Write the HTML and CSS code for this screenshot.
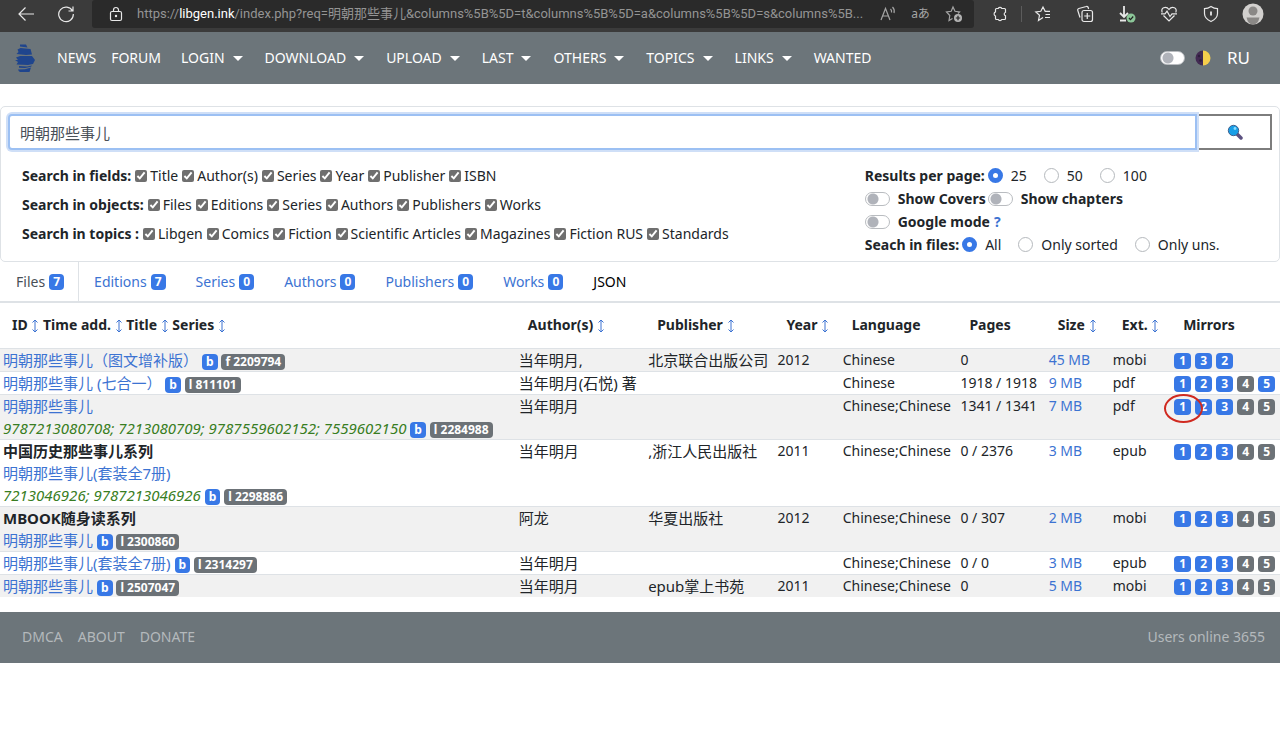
FILE: index.html
```html
<!DOCTYPE html>
<html lang="en">
<head>
  <meta charset="UTF-8">
  <meta name="viewport" content="width=device-width, initial-scale=1.0">
  <title>Library Genesis</title>
  <link rel="stylesheet" href="styles.css">
</head>
<body>

  <svg width="0" height="0" class="defs">
    <symbol id="sort" viewBox="0 0 7 14"><path d="M3.500 1v12M1 3.500L3.500 1 6 3.500M1 10.500L3.500 13 6 10.500"/></symbol>
  </svg>

  <div class="browser-bar">
    <button class="bar-btn nav-btn" aria-label="Back"><svg width="18" height="18" viewBox="0 0 18 18"><path d="M17 9H2M8.500 2.500L2 9l6.500 6.500"/></svg></button>
    <button class="bar-btn nav-btn" aria-label="Refresh"><svg width="18" height="18" viewBox="0 0 18 18"><path d="M15.500 6A7.300 7.300 0 1 0 16.300 9M16 1.500V6h-4.500"/></svg></button>
    <div class="address">
      <svg class="lock" width="16" height="16" viewBox="0 0 16 16"><rect x="2.500" y="5.500" width="11" height="9" rx="1.500"/><path d="M5.500 5.500V4a2.500 2.500 0 0 1 5 0v1.500"/><circle cx="8" cy="10" r=".6"/></svg>
      <span class="url">https://<span class="host">libgen.ink</span>/index.php?req=明朝那些事儿&amp;columns%5B%5D=t&amp;columns%5B%5D=a&amp;columns%5B%5D=s&amp;columns%5B...</span>
      <button class="bar-btn url-btn" aria-label="Read aloud"><svg width="18" height="18" viewBox="0 0 18 18"><path d="M2 15L6.500 3.500 11 15M3.500 11h6M11.500 4q1.500 1.500 1 3.500M13.500 2q2.500 2.500 1.500 6"/></svg></button>
      <button class="bar-btn url-btn" aria-label="Translate">aあ</button>
      <button class="bar-btn url-btn" aria-label="Add to favorites"><svg width="18" height="18" viewBox="0 0 18 18"><path d="M7.500 13.500L4 15.500l.8-5L1.500 7l4.700-.7L8 2l2 4.300 4.500.7-1.500 1.500"/><circle cx="13" cy="13" r="4" class="fill"/><path class="dark" d="M13 10.800v4.400M10.800 13h4.400"/></svg></button>
    </div>
    <button class="bar-btn" aria-label="Extensions"><svg width="18" height="18" viewBox="0 0 18 18"><path d="M5.500 3.500h1.700a2 2 0 0 1 3.600 0h2.700q1 0 1 1v2.700a1.900 1.900 0 0 0 0 3.600v2.700q0 1-1 1h-2.700a2 2 0 0 1-3.600 0H5.500q-1 0-1-1v-2.500a2.200 2.200 0 0 1 0-4.100V4.500q0-1 1-1z"/></svg></button>
    <span class="bar-sep"></span>
    <button class="bar-btn" aria-label="Favorites"><svg width="18" height="18" viewBox="0 0 18 18"><path d="M9 12.500l-4.500 3 1-5.200L1.800 7l5-.7L9 2l2.200 4.300H16M11.500 9.500H16M11 12.500h5"/></svg></button>
    <button class="bar-btn" aria-label="Collections"><svg width="18" height="18" viewBox="0 0 18 18"><path d="M4 12.500L1.800 5.500a1.500 1.500 0 0 1 1-2l7.500-2a1.500 1.500 0 0 1 1.900 1l.4 1.500"/><rect x="6" y="5.500" width="10.500" height="11" rx="2"/><path d="M11.250 8v6M8.250 11h6"/></svg></button>
    <button class="bar-btn" aria-label="Downloads"><svg width="18" height="18" viewBox="0 0 18 18"><path class="bold" d="M6 1v11M2 8l4 4 4-4M2 15.500h6"/><circle cx="13" cy="13" r="4.500" class="green"/><path class="dark" d="M11 13l1.500 1.700 2.700-3.200"/></svg></button>
    <button class="bar-btn" aria-label="Performance"><svg width="18" height="18" viewBox="0 0 18 18"><path d="M2.300 7.500C0 3 6 .5 9 4.500c3-4 9-1.500 6.700 3M3.500 10.500L9 16l5.500-5.500M1 8.800h4l2-2.600 3 5.300 2-2.700h5"/></svg></button>
    <button class="bar-btn" aria-label="Security"><svg width="18" height="18" viewBox="0 0 18 18"><path d="M9 1.500q3 2.200 6.500 2.200V8.500q0 5-6.500 8-6.500-3-6.500-8V3.700Q6 3.700 9 1.500z"/><path class="bold" d="M9 6.500v4"/></svg></button>
    <button class="bar-btn" aria-label="Profile"><svg width="22" height="22" viewBox="0 0 22 22"><circle class="face-bg" cx="11" cy="11" r="10.500"/><circle class="face" cx="11" cy="8" r="4.500"/><path class="face" d="M4.500 14.500h13q-1.500 7-6.500 7t-6.500-7z"/></svg></button>
  </div>

  <nav class="navbar">
    <a class="logo" href="#" aria-label="Home"><svg width="20" height="28" viewBox="0 0 20 28"><path d="M5 .5h6l1.500 3L5 2.500zM2.500 5.500l3-1.500 10 1 1.500 5.500-6 .5-9.500-1 2-2zM1 13.500l4-1.500h12l3 4-2 4-5 1-11.500-.5L3 18 0 16h3zM4 22l8 .5 5-1-1 1.200-6 1.300-6-.2zM3 25.500l7-.300 6-1.700-1.500 4.500H5q-1.500-1-2-2.500z"/></svg></a>
    <div class="menu menu-main">
      <a href="#">NEWS</a>
      <a href="#">FORUM</a>
    </div>
    <div class="menu menu-drops">
      <button class="drop">LOGIN</button>
      <button class="drop">DOWNLOAD</button>
      <button class="drop">UPLOAD</button>
      <button class="drop">LAST</button>
      <button class="drop">OTHERS</button>
      <button class="drop">TOPICS</button>
      <button class="drop">LINKS</button>
      <a href="#">WANTED</a>
    </div>
    <div class="nav-right">
      <input class="switch" type="checkbox" id="theme" aria-label="Dark mode">
      <label for="theme"><svg width="16" height="16" viewBox="0 0 16 16"><path fill="#422a52" d="M8 .5a7.500 7.500 0 0 0 0 15z"/><path fill="#f6ce4c" d="M8 .5a7.500 7.500 0 0 1 0 15z"/><circle cx="4" cy="6" r="1.200" fill="#2d1c3b"/><circle cx="5.500" cy="10.500" r="1.300" fill="#2d1c3b"/></svg></label>
      <a class="lang" href="#">RU</a>
    </div>
  </nav>

  <form class="search-card" onsubmit="return false">
    <div class="search-row">
      <input type="text" class="search-input" name="req" value="明朝那些事儿" aria-label="Search" autofocus>
      <button type="submit" class="search-btn" aria-label="Find"><svg width="16" height="16" viewBox="0 0 16 16"><path d="M9.500 9.500l4.500 4.500" stroke="#5b5080" stroke-width="3.500" stroke-linecap="round"/><circle cx="6.500" cy="6.500" r="5.200" fill="#189ee6" stroke="#40618e" stroke-width="1"/><circle cx="8" cy="4.500" r="1.400" fill="#8bdcff"/></svg></button>
    </div>
    <div class="options">
      <div class="filters">
        <div class="filter-line"><b>Search in fields:</b>
          <label><input type="checkbox" checked> Title</label>
          <label><input type="checkbox" checked> Author(s)</label>
          <label><input type="checkbox" checked> Series</label>
          <label><input type="checkbox" checked> Year</label>
          <label><input type="checkbox" checked> Publisher</label>
          <label><input type="checkbox" checked> ISBN</label>
        </div>
        <div class="filter-line"><b>Search in objects:</b>
          <label><input type="checkbox" checked> Files</label>
          <label><input type="checkbox" checked> Editions</label>
          <label><input type="checkbox" checked> Series</label>
          <label><input type="checkbox" checked> Authors</label>
          <label><input type="checkbox" checked> Publishers</label>
          <label><input type="checkbox" checked> Works</label>
        </div>
        <div class="filter-line"><b>Search in topics :</b>
          <label><input type="checkbox" checked> Libgen</label>
          <label><input type="checkbox" checked> Comics</label>
          <label><input type="checkbox" checked> Fiction</label>
          <label><input type="checkbox" checked> Scientific Articles</label>
          <label><input type="checkbox" checked> Magazines</label>
          <label><input type="checkbox" checked> Fiction RUS</label>
          <label><input type="checkbox" checked> Standards</label>
        </div>
      </div>
      <div class="settings">
        <div class="setting-line"><b>Results per page:</b>
          <label><input type="radio" name="res" checked>25</label>
          <label><input type="radio" name="res">50</label>
          <label><input type="radio" name="res">100</label>
        </div>
        <div class="setting-line switches">
          <label><input type="checkbox" class="switch"><b>Show Covers</b></label>
          <label><input type="checkbox" class="switch"><b>Show chapters</b></label>
        </div>
        <div class="setting-line switches">
          <label><input type="checkbox" class="switch"><b>Google mode</b></label>
          <a class="help" href="#">?</a>
        </div>
        <div class="setting-line"><b>Seach in files:</b>
          <label><input type="radio" name="files" checked>All</label>
          <label><input type="radio" name="files">Only sorted</label>
          <label><input type="radio" name="files">Only uns.</label>
        </div>
      </div>
    </div>
  </form>

  <div class="tabs">
    <a class="tab active" href="#">Files <span class="badge">7</span></a>
    <a class="tab" href="#">Editions <span class="badge">7</span></a>
    <a class="tab" href="#">Series <span class="badge">0</span></a>
    <a class="tab" href="#">Authors <span class="badge">0</span></a>
    <a class="tab" href="#">Publishers <span class="badge">0</span></a>
    <a class="tab" href="#">Works <span class="badge">0</span></a>
    <a class="tab json" href="#">JSON</a>
  </div>

  <table class="results">
    <colgroup>
      <col class="c-title"><col class="c-author"><col class="c-publisher"><col class="c-year"><col class="c-lang"><col class="c-pages"><col class="c-size"><col class="c-ext"><col class="c-mirrors">
    </colgroup>
    <thead>
      <tr>
        <th>ID <a href="#" aria-label="Sort by ID"><svg><use href="#sort"/></svg></a> Time add. <a href="#" aria-label="Sort by time"><svg><use href="#sort"/></svg></a> Title <a href="#" aria-label="Sort by title"><svg><use href="#sort"/></svg></a> Series <a href="#" aria-label="Sort by series"><svg><use href="#sort"/></svg></a></th>
        <th>Author(s) <a href="#" aria-label="Sort by author"><svg><use href="#sort"/></svg></a></th>
        <th>Publisher <a href="#" aria-label="Sort by publisher"><svg><use href="#sort"/></svg></a></th>
        <th>Year <a href="#" aria-label="Sort by year"><svg><use href="#sort"/></svg></a></th>
        <th>Language</th>
        <th>Pages</th>
        <th>Size <a href="#" aria-label="Sort by size"><svg><use href="#sort"/></svg></a></th>
        <th>Ext. <a href="#" aria-label="Sort by extension"><svg><use href="#sort"/></svg></a></th>
        <th>Mirrors</th>
      </tr>
    </thead>
    <tbody>
      <tr>
        <td class="zh"><a href="#">明朝那些事儿（图文增补版）</a> <a class="badge" href="#">b</a> <span class="badge gray">f 2209794</span></td>
        <td class="zh">当年明月,</td><td class="zh">北京联合出版公司</td><td>2012</td><td>Chinese</td><td>0</td><td><a href="#">45 MB</a></td><td>mobi</td>
        <td><div class="mirrors"><a class="badge" href="#">1</a><a class="badge" href="#">3</a><a class="badge" href="#">2</a></div></td>
      </tr>
      <tr>
        <td class="zh"><a href="#">明朝那些事儿 (七合一）</a> <a class="badge" href="#">b</a> <span class="badge gray">l 811101</span></td>
        <td class="zh">当年明月(石悦) 著</td><td></td><td></td><td>Chinese</td><td>1918 / 1918</td><td><a href="#">9 MB</a></td><td>pdf</td>
        <td><div class="mirrors"><a class="badge" href="#">1</a><a class="badge" href="#">2</a><a class="badge" href="#">3</a><a class="badge gray" href="#">4</a><a class="badge" href="#">5</a></div></td>
      </tr>
      <tr>
        <td class="zh"><a href="#">明朝那些事儿</a><br><i class="isbn">9787213080708; 7213080709; 9787559602152; 7559602150</i> <a class="badge" href="#">b</a> <span class="badge gray">l 2284988</span></td>
        <td class="zh">当年明月</td><td></td><td></td><td>Chinese;Chinese</td><td>1341 / 1341</td><td><a href="#">7 MB</a></td><td>pdf</td>
        <td><div class="mirrors"><a class="badge circled" href="#">1</a><a class="badge" href="#">2</a><a class="badge" href="#">3</a><a class="badge gray" href="#">4</a><a class="badge gray" href="#">5</a></div></td>
      </tr>
      <tr>
        <td class="zh"><b>中国历史那些事儿系列</b><br><a href="#">明朝那些事儿(套装全7册)</a><br><i class="isbn">7213046926; 9787213046926</i> <a class="badge" href="#">b</a> <span class="badge gray">l 2298886</span></td>
        <td class="zh">当年明月</td><td class="zh">,浙江人民出版社</td><td>2011</td><td>Chinese;Chinese</td><td>0 / 2376</td><td><a href="#">3 MB</a></td><td>epub</td>
        <td><div class="mirrors"><a class="badge" href="#">1</a><a class="badge" href="#">2</a><a class="badge" href="#">3</a><a class="badge gray" href="#">4</a><a class="badge gray" href="#">5</a></div></td>
      </tr>
      <tr>
        <td class="zh"><b>MBOOK随身读系列</b><br><a href="#">明朝那些事儿</a> <a class="badge" href="#">b</a> <span class="badge gray">l 2300860</span></td>
        <td class="zh">阿龙</td><td class="zh">华夏出版社</td><td>2012</td><td>Chinese;Chinese</td><td>0 / 307</td><td><a href="#">2 MB</a></td><td>mobi</td>
        <td><div class="mirrors"><a class="badge" href="#">1</a><a class="badge" href="#">2</a><a class="badge" href="#">3</a><a class="badge gray" href="#">4</a><a class="badge gray" href="#">5</a></div></td>
      </tr>
      <tr>
        <td class="zh"><a href="#">明朝那些事儿(套装全7册)</a> <a class="badge" href="#">b</a> <span class="badge gray">l 2314297</span></td>
        <td class="zh">当年明月</td><td></td><td></td><td>Chinese;Chinese</td><td>0 / 0</td><td><a href="#">3 MB</a></td><td>epub</td>
        <td><div class="mirrors"><a class="badge" href="#">1</a><a class="badge" href="#">2</a><a class="badge" href="#">3</a><a class="badge gray" href="#">4</a><a class="badge gray" href="#">5</a></div></td>
      </tr>
      <tr>
        <td class="zh"><a href="#">明朝那些事儿</a> <a class="badge" href="#">b</a> <span class="badge gray">l 2507047</span></td>
        <td class="zh">当年明月</td><td class="zh">epub掌上书苑</td><td>2011</td><td>Chinese;Chinese</td><td>0</td><td><a href="#">5 MB</a></td><td>mobi</td>
        <td><div class="mirrors"><a class="badge" href="#">1</a><a class="badge" href="#">2</a><a class="badge" href="#">3</a><a class="badge gray" href="#">4</a><a class="badge gray" href="#">5</a></div></td>
      </tr>
    </tbody>
  </table>

  <footer class="footer">
    <a href="#">DMCA</a>
    <a href="#">ABOUT</a>
    <a href="#">DONATE</a>
    <span class="online">Users online 3655</span>
  </footer>

</body>
</html>
```

FILE: styles.css
```css
* {
  box-sizing: border-box;
}

body {
  margin: 0;
  background: #fff;
  color: #212529;
  font-family: "Noto Sans", "Noto Sans CJK SC", sans-serif;
  font-size: 14px;
  line-height: 22px;
}

a {
  color: #3c73d2;
  text-decoration: none;
}

button {
  border: none;
  background: none;
  padding: 0;
  font: inherit;
  color: inherit;
}

.defs {
  display: none;
}

/* browser toolbar */
.browser-bar {
  display: flex;
  align-items: center;
  height: 32px;
  padding: 0 6px 4px;
  background: #3b3b3b;
  color: #e8e8e8;
}

.bar-btn {
  display: flex;
  justify-content: center;
  align-items: center;
  flex: none;
  width: 42px;
  height: 28px;
}

.nav-btn {
  width: 40px;
}

.bar-btn svg,
.lock {
  fill: none;
  stroke: currentColor;
  stroke-width: 1.2;
  flex: none;
}

.bar-btn .fill {
  fill: #b5b5b5;
  stroke: none;
}

.bar-btn .dark {
  stroke: #222;
}

.bar-btn .bold {
  stroke-width: 1.8;
}

.bar-btn .green {
  fill: #8cc799;
  stroke: none;
}

.bar-btn .face-bg {
  fill: #d2d0ce;
  stroke: none;
}

.bar-btn .face {
  fill: #8a8886;
  stroke: none;
}

.bar-sep {
  width: 1px;
  height: 16px;
  background: #5c5c5c;
}

.address {
  display: flex;
  align-items: center;
  flex: 1;
  min-width: 0;
  height: 28px;
  margin: 0 5px 0 6px;
  padding: 0 4px 0 16px;
  background: #2a2a2a;
  border-radius: 3px;
}

.url {
  flex: 1;
  margin-left: 13px;
  white-space: nowrap;
  color: #949494;
  font-family: Roboto, "Noto Sans CJK SC", sans-serif;
  font-size: 13px;
}

.host {
  color: #fff;
}

.url-btn {
  width: 33px;
  color: #a5a5a5;
  font-size: 12px;
}

/* site navigation */
.navbar {
  display: flex;
  align-items: center;
  height: 52px;
  padding: 0 30px 0 15px;
  background: #6c757a;
  color: #fff;
}

.navbar a {
  color: #fff;
}

.logo {
  display: flex;
  fill: #1f458d;
}

.menu {
  display: flex;
}

.menu-main {
  gap: 15px;
  margin-left: 22px;
}

.menu-drops {
  gap: 22px;
  margin-left: 20px;
}

.drop {
  display: flex;
  align-items: center;
  gap: 8px;
}

.drop::after {
  content: "";
  border: 5px solid transparent;
  border-top-color: #fff;
  border-bottom: none;
}

.nav-right {
  display: flex;
  align-items: center;
  gap: 10px;
  margin-left: auto;
}

.nav-right label {
  display: flex;
}

.lang {
  margin-left: 6px;
  font-size: 17px;
}

/* search form */
.search-card {
  margin-top: 22px;
  padding: 7px 7px 5px;
  border: 1px solid #dee2e6;
  border-radius: 5px;
}

.search-row {
  display: flex;
}

.search-input {
  flex: 1;
  height: 36px;
  padding: 0 10px;
  border: 2px solid #9cc0f3;
  border-radius: 4px 0 0 4px;
  outline: none;
  box-shadow: 0 0 0 2px #cfdff7;
  font: inherit;
  font-size: 15px;
  color: #495057;
  z-index: 1;
}

.search-btn {
  display: flex;
  justify-content: center;
  align-items: center;
  width: 75px;
  border: 2px solid #7d7d7d;
}

.search-btn svg {
  fill: none;
}

.options {
  display: grid;
  grid-template-columns: 15fr 7fr;
  padding: 11px 14px 0;
}

.filter-line {
  display: flex;
  gap: 4px;
  line-height: 29px;
}

.filter-line label {
  display: flex;
  align-items: center;
  gap: 3px;
}

.filter-line input {
  width: 12px;
  height: 12px;
  margin: 0;
  accent-color: #6f6f6f;
}

.settings {
  padding-top: 3px;
}

.setting-line {
  display: flex;
  line-height: 23px;
}

.setting-line label {
  display: flex;
  align-items: center;
  gap: 8px;
  margin-right: 17px;
}

.setting-line input {
  flex: none;
}

.setting-line b + label {
  margin-left: 3px;
}

.setting-line.switches label {
  margin-right: 2px;
}

.help {
  margin-left: 2px;
  font-weight: bold;
}

input[type="radio"] {
  appearance: none;
  width: 15px;
  height: 15px;
  margin: 0;
  border: 1px solid #b5b9bd;
  border-radius: 50%;
}

input[type="radio"]:checked {
  border: 5px solid #3878e6;
}

.switch {
  appearance: none;
  width: 25px;
  height: 14px;
  margin: 0;
  border: 1px solid #b9bcc0;
  border-radius: 7px;
  background: radial-gradient(circle at 7px 6px, #b0b3ba 5px, #fff 6px);
}

/* tabs */
.tabs {
  display: flex;
  padding-left: 1px;
  border-bottom: 2px solid #dee2e6;
}

.tab {
  display: flex;
  align-items: center;
  gap: 4px;
  height: 39px;
  padding: 0 14px 0 15px;
  border-right: 1px solid transparent;
}

.tab.active {
  border-right-color: #dee2e6;
  color: #495057;
}

.tab.json {
  color: #000;
}

.badge {
  display: inline-block;
  min-width: 15px;
  padding: 0 4px;
  border-radius: 4px;
  background: #3878e6;
  color: #fff;
  font-size: 12px;
  font-weight: bold;
  line-height: 16px;
  text-align: center;
}

.badge.gray {
  background: #6c7277;
}

/* result list */
.results {
  width: 100%;
  table-layout: fixed;
  border-collapse: collapse;
}

.c-title { width: 40.3%; }
.c-author { width: 10.1%; }
.c-publisher { width: 10.1%; }
.c-year { width: 5.1%; }
.c-lang { width: 9.2%; }
.c-pages { width: 6.9%; }
.c-size { width: 5%; }
.c-ext { width: 4.8%; }
.c-mirrors { width: 8.5%; }

.results th {
  height: 45px;
  padding: 0 0 0 12px;
  text-align: left;
  white-space: nowrap;
}

.results th svg {
  width: 8px;
  height: 14px;
  vertical-align: -3px;
  fill: none;
  stroke: #3c73d2;
}

.results td {
  padding: 0 3px;
  border-top: 1px solid #dee2e6;
  vertical-align: top;
  white-space: nowrap;
}

.results tbody tr:nth-child(odd) {
  background: #f1f1f1;
}

.results .zh {
  font-size: 15px;
}

.isbn {
  color: #387d22;
}

.mirrors {
  display: flex;
  align-items: center;
  gap: 4px;
  height: 22px;
  padding-top: 2px;
}

.mirrors .badge {
  width: 17px;
}

.circled {
  position: relative;
}

/* red marker around the link */
.circled::after {
  content: "";
  position: absolute;
  z-index: 1;
  top: -5px;
  left: -10px;
  width: 35px;
  height: 25px;
  border: 2px solid #d02a20;
  border-radius: 50%;
}

/* footer */
.footer {
  display: flex;
  align-items: center;
  gap: 15px;
  height: 51px;
  margin-top: 15px;
  padding: 0 15px 0 22px;
  background: #6c757a;
  color: #b4b9bc;
}

.footer a {
  color: #b4b9bc;
}

.online {
  margin-left: auto;
}
```
